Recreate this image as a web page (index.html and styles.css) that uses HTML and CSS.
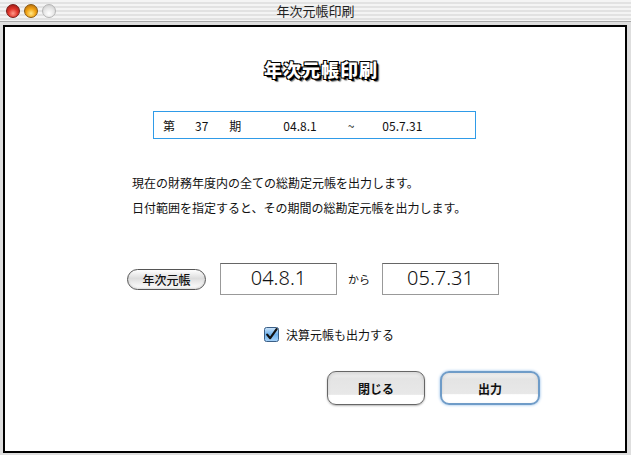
FILE: index.html
```html
<!DOCTYPE html>
<html lang="ja">
  <head>
    <meta charset="UTF-8" />
    <meta name="viewport" content="width=device-width, initial-scale=1.0" />
    <title>年次元帳印刷</title>
    <link rel="stylesheet" href="styles.css">
  </head>
  <body>
    <div class="titlebar">
      <div class="lights">
        <span class="light red"></span>
        <span class="light amber"></span>
        <span class="light off"></span>
      </div>
      <div class="title">年次元帳印刷</div>
    </div>

    <div class="frame">
      <h1 class="heading">年次元帳印刷</h1>

      <div class="period">
        <span class="p-dai">第</span>
        <span class="p-no">37</span>
        <span class="p-ki">期</span>
        <span class="p-from">04.8.1</span>
        <span class="p-tilde">~</span>
        <span class="p-to">05.7.31</span>
      </div>

      <div class="notes">
        <p>現在の財務年度内の全ての総勘定元帳を出力します。</p>
        <p>日付範囲を指定すると、その期間の総勘定元帳を出力します。</p>
      </div>

      <div class="range-row">
        <button class="pill">年次元帳</button>
        <div class="date-box">04.8.1</div>
        <span class="kara">から</span>
        <div class="date-box">05.7.31</div>
      </div>

      <label class="check-row">
        <svg class="checkbox" width="15" height="15" viewBox="0 0 15 15">
          <defs>
            <linearGradient id="cb" x1="0" y1="0" x2="0" y2="1">
              <stop offset="0" stop-color="#cfe6fb" />
              <stop offset="0.5" stop-color="#6fb1ec" />
              <stop offset="1" stop-color="#a9d4fa" />
            </linearGradient>
          </defs>
          <rect x="0.5" y="0.5" width="14" height="14" rx="2" fill="url(#cb)" stroke="#3b5f86" />
          <path d="M3.2 7.6 L6.2 11.2 L12.6 2.2" fill="none" stroke="#111" stroke-width="2.2" stroke-linecap="round" stroke-linejoin="round" />
        </svg>
        <span>決算元帳も出力する</span>
      </label>

      <div class="actions">
        <button class="aqua">閉じる</button>
        <button class="aqua default">出力</button>
      </div>
    </div>
  </body>
</html>
```

FILE: styles.css
```css
body {
  margin: 0;
  background-color: #dedede;
  font-family: "Noto Sans CJK JP", "DejaVu Sans", sans-serif;
  color: #111;
  width: 631px;
  height: 455px;
  overflow: hidden;
}

.titlebar {
  position: relative;
  height: 21px;
  border-bottom: 1px solid #a8a8a8;
  background: repeating-linear-gradient(#f4f4f4 0, #f4f4f4 2px, #e2e2e2 2px, #e2e2e2 4px);
}

.lights {
  display: flex;
  gap: 4px;
  padding: 4px 0 0 6px;
}

.light {
  width: 14px;
  height: 14px;
  border-radius: 50%;
  box-sizing: border-box;
}

.red {
  background: radial-gradient(circle at 50% 70%, #ff9a8a 0, #e0352a 45%, #8e1410 100%);
  border: 1px solid #7a1c18;
}

.amber {
  background: radial-gradient(circle at 50% 70%, #ffe98a 0, #f2a414 45%, #a8600a 100%);
  border: 1px solid #8a5a10;
}

.off {
  background: radial-gradient(circle at 50% 70%, #ffffff 0, #e6e6e6 50%, #c4c4c4 100%);
  border: 1px solid #b4b4b4;
}

.title {
  position: absolute;
  top: 0;
  left: 0;
  right: 0;
  text-align: center;
  font-size: 13px;
  line-height: 22px;
  color: #222;
}

.frame {
  margin: 3px 4px 0 3px;
  height: 424px;
  border: 2px solid #000;
  background-color: #fff;
}

.heading {
  margin: 31px 0 0 12px;
  text-align: center;
  font-size: 18px;
  line-height: 22px;
  font-weight: 900;
  color: #fff;
  letter-spacing: 1px;
  text-shadow:
    -1px -1px 0 #000, 1px -1px 0 #000, -1px 1px 0 #000, 1px 1px 0 #000,
    2px 2px 0 #000, 3px 3px 1px #777;
}

.period {
  display: flex;
  align-items: center;
  box-sizing: border-box;
  width: 323px;
  height: 28px;
  margin: 31px 0 0 148px;
  padding-left: 9px;
  border: 1px solid #2f9be8;
  font-size: 12px;
}

.p-no { margin-left: 20px; }
.p-ki { margin-left: 21px; }
.p-from { margin-left: 42px; }
.p-tilde { margin-left: 31px; }
.p-to { margin-left: 28px; }

.notes {
  margin: 31px 0 0 127px;
  font-size: 12px;
}

.notes p {
  margin: 0;
  line-height: 25px;
}

.range-row {
  display: flex;
  align-items: center;
  margin: 43px 0 0 122px;
}

.pill {
  width: 79px;
  height: 21px;
  padding: 0;
  border: 1px solid #555;
  border-radius: 11px;
  background: linear-gradient(#ffffff 0, #dcdcdc 45%, #e8e8e8 60%, #ffffff 100%);
  box-shadow: inset 0 -1px 2px rgba(0, 0, 0, 0.15);
  font-family: inherit;
  font-size: 12px;
  font-weight: 500;
  color: #111;
}

.date-box {
  box-sizing: border-box;
  width: 117px;
  height: 32px;
  margin-left: 14px;
  border: 1px solid #999;
  border-top-color: #666;
  text-align: center;
  font-family: "Noto Sans", "Liberation Sans", sans-serif;
  font-size: 20px;
  font-weight: 300;
  line-height: 28px;
}

.kara {
  margin: 0 -2px 0 11px;
  font-size: 11px;
}

.check-row {
  display: flex;
  align-items: center;
  gap: 7px;
  margin: 31px 0 0 259px;
  font-size: 12px;
}

.actions {
  display: flex;
  justify-content: flex-end;
  gap: 15px;
  margin: 28px 85px 0 0;
}

.aqua {
  width: 98px;
  height: 34px;
  padding: 0;
  border: 1px solid #666;
  border-radius: 9px;
  background: linear-gradient(#f6f6f6 0, #e4e4e4 20%, #e8e8e8 70%, #ffffff 72%, #ffffff 100%);
  box-shadow: inset 0 2px 3px rgba(0, 0, 0, 0.12), 0 1px 2px rgba(0, 0, 0, 0.3);
  font-family: inherit;
  font-size: 12px;
  font-weight: bold;
  color: #111;
}

.aqua.default {
  width: 100px;
  border: 2px solid #6f9cc8;
  box-shadow: 0 0 3px #86b6e6, inset 0 1px 3px rgba(0, 0, 0, 0.1);
}
```
